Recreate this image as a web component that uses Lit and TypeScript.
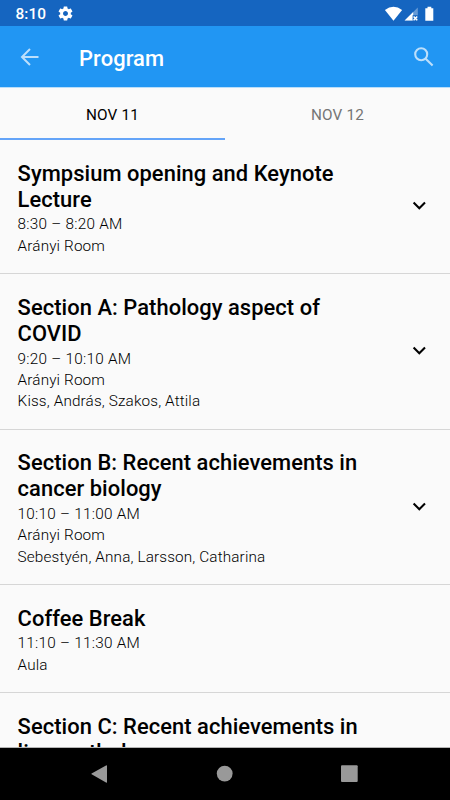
import { LitElement, html, css, nothing } from "lit";
import { customElement, property } from "lit/decorators.js";

interface Session {
  title: string;
  time?: string;
  lines: string[];
  expandable: boolean;
}

const sessions: Session[] = [
  { title: "Sympsium opening and Keynote Lecture", time: "8:30 – 8:20 AM", lines: ["Arányi Room"], expandable: true },
  { title: "Section A: Pathology aspect of COVID", time: "9:20 – 10:10 AM", lines: ["Arányi Room", "Kiss, András, Szakos, Attila"], expandable: true },
  { title: "Section B: Recent achievements in cancer biology", time: "10:10 – 11:00 AM", lines: ["Arányi Room", "Sebestyén, Anna, Larsson, Catharina"], expandable: true },
  { title: "Coffee Break", time: "11:10 – 11:30 AM", lines: ["Aula"], expandable: false },
  { title: "Section C: Recent achievements in liver pathology", lines: [], expandable: false },
];

@customElement("session-item")
export class SessionItem extends LitElement {
  @property({ attribute: false }) session!: Session;

  static styles = css`
    :host {
      display: flex;
      align-items: center;
      box-sizing: border-box;
      flex: none;
      padding: 20.6px 20px 16px 17.6px;
      border-bottom: 1px solid #d6d6d6;
    }
    .text { width: 362px; }
    .title {
      font-size: 21.9px;
      line-height: 25.9px;
      font-weight: 500;
      letter-spacing: 0.06px;
      color: #000;
      padding-bottom: 2px;
    }
    .line {
      font-size: 15.3px;
      line-height: 21.35px;
      font-weight: 300;
      letter-spacing: 0.14px;
      color: #000;
      white-space: nowrap;
    }
    .time { letter-spacing: 0.26px; }
    .chevron { margin: 0 0 7px auto; display: block; }
  `;

  render() {
    const s = this.session;
    return html`
      <div class="text">
        <div class="title">${s.title}</div>
        ${s.time ? html`<div class="line time">${s.time}</div>` : nothing}
        ${s.lines.map((l) => html`<div class="line">${l}</div>`)}
      </div>
      ${s.expandable
        ? html`<svg class="chevron" width="22" height="22" viewBox="0 0 22 22">
            <path d="M5.6 8.6 11.3 14.2 17 8.6" fill="none" stroke="#000" stroke-width="2.1" />
          </svg>`
        : nothing}
    `;
  }
}

@customElement("app-root")
export class AppRoot extends LitElement {
  static styles = css`
    :host {
      display: flex;
      flex-direction: column;
      width: 450px;
      height: 800px;
      overflow: hidden;
      background: #fafafa;
      font-family: Roboto, "Liberation Sans", sans-serif;
    }
    svg { display: block; flex: none; }
    .status {
      flex: none;
      height: 26px;
      box-sizing: border-box;
      background: #1565c0;
      color: #fff;
      display: flex;
      align-items: center;
      padding: 1px 15px 0 15.5px;
    }
    .clock { font-size: 15.4px; font-weight: 500; letter-spacing: 0.05px; width: 41px; padding-top: 1px; }
    .signals { margin-left: auto; }
    .bar {
      flex: none;
      height: 62px;
      background: #2196f3;
      color: #fff;
      display: flex;
      align-items: center;
      padding: 0 14.5px 0 18px;
      border-bottom: 1px solid #b9defa;
      box-sizing: border-box;
    }
    .heading { margin-left: 37px; font-size: 21.9px; font-weight: 500; letter-spacing: 0.1px; padding-top: 3px; }
    .search { margin-left: auto; }
    .tabs { flex: none; display: flex; height: 52px; }
    .tab {
      flex: 1;
      box-sizing: border-box;
      display: flex;
      align-items: center;
      justify-content: center;
      padding-top: 3px;
      border-bottom: 2px solid transparent;
      font-size: 15.3px;
      font-weight: 400;
      letter-spacing: 0.15px;
      color: #757575;
    }
    .active { color: #000; border-color: #64a4f8; }
    .list { flex: 1; min-height: 0; overflow: hidden; display: flex; flex-direction: column; }
    .nav {
      flex: none;
      height: 53px;
      box-sizing: border-box;
      border-top: 1px solid #b4b4b4;
      background: #000;
      display: flex;
    }
  `;

  render() {
    return html`
      <div class="status">
        <span class="clock">8:10</span>
        <svg width="17" height="17" viewBox="0 0 24 24" fill="#fff">
          <path d="M19.43 12.98c.04-.32.07-.64.07-.98s-.03-.66-.07-.98l2.11-1.65c.19-.15.24-.42.12-.64l-2-3.46c-.12-.22-.39-.3-.61-.22l-2.49 1c-.52-.4-1.08-.73-1.69-.98l-.38-2.65C14.46 2.18 14.25 2 14 2h-4c-.25 0-.46.18-.49.42l-.38 2.65c-.61.25-1.17.59-1.69.98l-2.49-1c-.23-.09-.49 0-.61.22l-2 3.46c-.13.22-.07.49.12.64l2.11 1.65c-.04.32-.07.65-.07.98s.03.66.07.98l-2.11 1.65c-.19.15-.24.42-.12.64l2 3.46c.12.22.39.3.61.22l2.49-1c.52.4 1.08.73 1.69.98l.38 2.65c.03.24.24.42.49.42h4c.25 0 .46-.18.49-.42l.38-2.65c.61-.25 1.17-.59 1.69-.98l2.49 1c.23.09.49 0 .61-.22l2-3.46c.12-.22.07-.49-.12-.64l-2.11-1.65zM12 15.5c-1.93 0-3.5-1.57-3.5-3.5s1.57-3.5 3.5-3.5 3.5 1.57 3.5 3.5-1.57 3.5-3.5 3.5z" />
        </svg>
        <svg class="signals" width="51" height="16" viewBox="0 0 51 16">
          <path d="M.9 4.1Q9.5-2.6 18.1 4.1L9.5 14.7Z" fill="#fff" />
          <path d="M20.6 14.6 33.8 1.4V14.6Z" fill="#fff" fill-opacity=".35" />
          <path d="M20.6 14.6 29.2 6V14.6Z" fill="#fff" />
          <path d="M28.6 9.2H33.8V14.6H28.6Z" fill="#1565c0" />
          <path d="M29.6 10.4 33.2 14.2M33.2 10.4 29.6 14.2" stroke="#fff" stroke-width="1.5" />
          <path d="M41.3 2.2H43.5V.7H47.3V2.2H49.3V14.8H41.3Z" fill="#fff" />
        </svg>
      </div>
      <div class="bar">
        <svg width="24" height="24" viewBox="0 0 24 24" fill="none" stroke="#bcdffb" stroke-width="2">
          <path d="M20.5 12H4M12 4 4 12 12 20" />
        </svg>
        <span class="heading">Program</span>
        <svg class="search" width="24" height="24" viewBox="0 0 24 24" fill="none" stroke="#bcdffb" stroke-width="2.1">
          <circle cx="9.2" cy="9.2" r="6" />
          <path d="M13.4 13.4 20.6 20.6" />
        </svg>
      </div>
      <div class="tabs">
        <div class="tab active">NOV 11</div>
        <div class="tab">NOV 12</div>
      </div>
      <div class="list">
        ${sessions.map((s) => html`<session-item .session=${s}></session-item>`)}
      </div>
      <div class="nav">
        <svg width="450" height="52" viewBox="0 0 450 52" fill="#999">
          <path d="M91.6 25.4 106 17.4Q107 17 107 18V34Q107 35 106 34.4L91.6 26.3Q91 25.9 91.6 25.4Z" />
          <circle cx="224.7" cy="25.6" r="7.9" />
          <rect x="341" y="17.2" width="16.7" height="16.8" rx="1" />
        </svg>
      </div>
    `;
  }
}
